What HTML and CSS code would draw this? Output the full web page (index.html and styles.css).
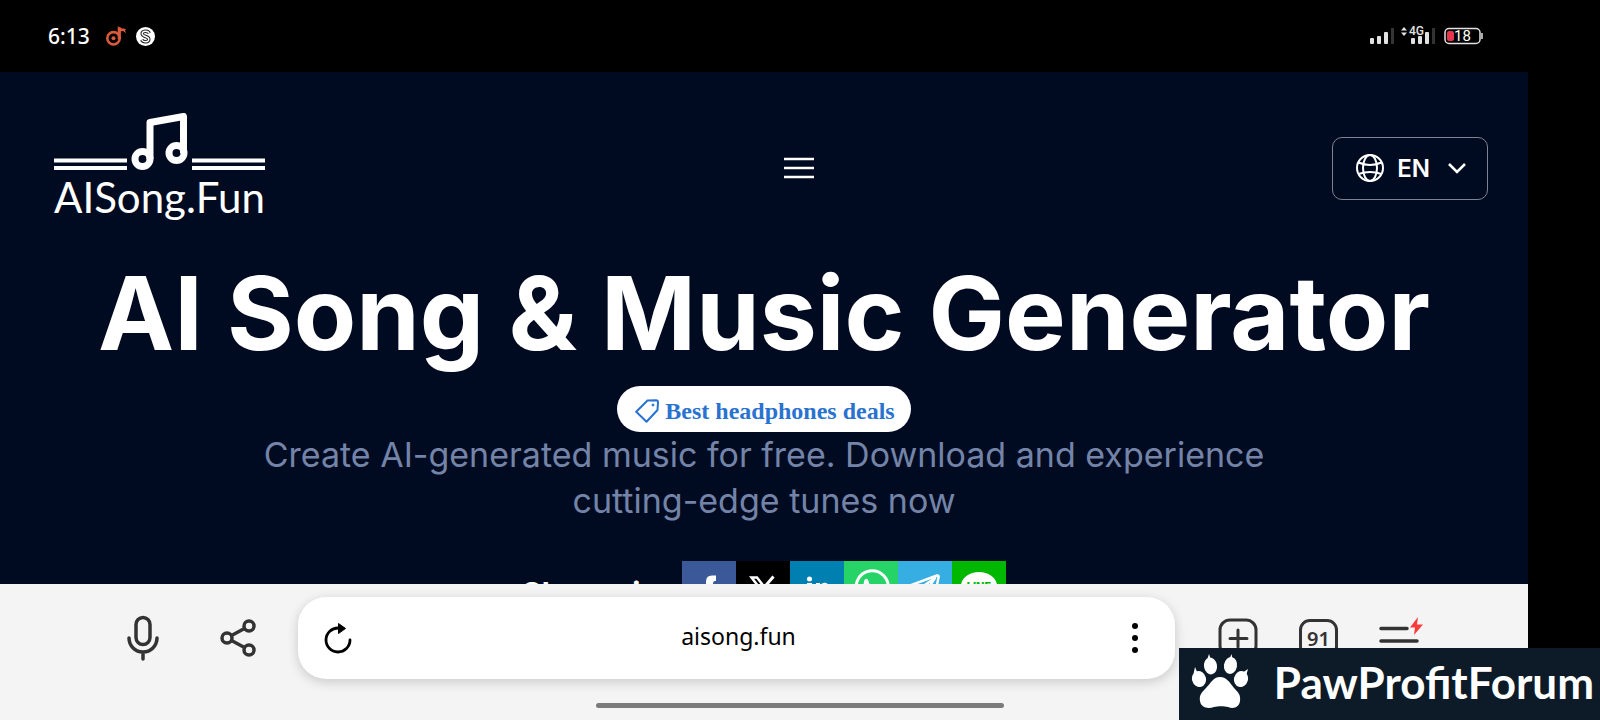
FILE: index.html
```
<!DOCTYPE html>
<html lang="en">
<head>
    <meta charset="UTF-8">
    <meta name="viewport" content="width=device-width, initial-scale=1.0">
    <title>AI Song &amp; Music Generator</title>
    <link rel="stylesheet" href="styles.css">
</head>
<body>
    <div class="phone">
        <!-- Status bar -->
        <div class="status-bar">
            <div class="status-left">
                <span class="clock">6:13</span>
                <svg class="status-note" viewBox="0 0 20 20" width="20" height="20">
                    <circle cx="7.5" cy="12.3" r="6.2" fill="none" stroke="#dc5a3c" stroke-width="2.600"/>
                    <circle cx="7.5" cy="12.3" r="2" fill="#dc5a3c"/>
                    <path d="M13.3 13V1.5" stroke="#dc5a3c" stroke-width="3.2"/>
                    <path d="M11.5 0l4 2.2 4.5.8-1 1.5 1 2.8-3-2.3-3.2.5z" fill="#dc5a3c"/>
                </svg>
                <svg class="status-s" viewBox="0 0 20 20" width="19" height="19">
                    <circle cx="10" cy="10" r="10" fill="#fff"/>
                    <path d="M14 6.6C12.500 3.500 6.500 3.800 6.500 7.200c0 3.400 7 2.200 7 5.600 0 3.400-6 3.700-7.500.6" fill="none" stroke="#222" stroke-width="3.600"/>
                    <path d="M14 6.600C12.500 3.500 6.500 3.800 6.500 7.200c0 3.400 7 2.200 7 5.600 0 3.400-6 3.700-7.500.6" fill="none" stroke="#fff" stroke-width="1.400"/>
                </svg>
            </div>
            <div class="status-right">
                <svg viewBox="0 0 26 20" width="26" height="20" fill="#e2e2e2">
                    <rect x="1" y="12" width="4" height="6" rx="1"/>
                    <rect x="8" y="10" width="4" height="8" rx="1"/>
                    <rect x="15" y="6" width="4" height="12" rx="1"/>
                    <rect x="22" y="2" width="3" height="16" fill="#333"/>
                </svg>
                <svg class="signal-4g" viewBox="0 0 36 20" width="36" height="20" fill="#e2e2e2">
                    <path d="M1 4.500L4 1l3 3.500zM1 6.500L4 10l3-3.500z"/>
                    <text x="9" y="9" class="signal-text">4G</text>
                    <rect x="11" y="12" width="4" height="6" rx="1"/>
                    <rect x="18" y="10" width="4" height="8" rx="1"/>
                    <rect x="25" y="6" width="4" height="12" rx="1"/>
                    <rect x="32" y="2" width="3" height="16" fill="#333"/>
                </svg>
                <svg viewBox="0 0 39 18" width="39" height="18">
                    <rect x="1" y="1.500" width="35" height="15" rx="4" fill="none" stroke="#e2e2e2" stroke-width="1.500"/>
                    <rect x="37" y="6" width="2" height="6" fill="#aaa"/>
                    <rect x="3" y="4" width="7" height="10" rx="2" fill="#e8364a"/>
                    <text x="10" y="14" class="battery-text">18</text>
                </svg>
            </div>
        </div>

        <!-- Web page -->
        <main class="page">
            <header class="site-header">
                <a class="logo" href="#" aria-label="AISong.Fun">
                    <svg viewBox="0 0 212 58" width="212" height="58" fill="none" stroke="#fff">
                        <path d="M0 47.500h73M0 55h73M138 47.500h73M138 55h73" stroke-width="4"/>
                        <circle cx="88.500" cy="46" r="7.500" stroke-width="7"/>
                        <circle cx="122.500" cy="40" r="7.500" stroke-width="7"/>
                        <path d="M96 46V9.500L129.500 3.500V40" stroke-width="7" stroke-linejoin="round"/>
                    </svg>
                    <span class="logo-text">AISong.Fun</span>
                </a>
                <button class="menu-btn" aria-label="Menu">
                    <svg viewBox="0 0 32 24" width="32" height="24" stroke="#fff" stroke-width="2.500">
                        <path d="M1 3h30M1 12h30M1 21h30"/>
                    </svg>
                </button>
                <button class="lang-btn">
                    <svg viewBox="0 0 28 28" width="28" height="28" fill="none" stroke="#fff" stroke-width="2">
                        <circle cx="14" cy="14" r="13"/>
                        <ellipse cx="14" cy="14" rx="7" ry="13"/>
                        <path d="M2.500 8.500Q14 13.500 25.500 8.500M2.500 20Q14 16 25.500 20"/>
                    </svg>
                    <span>EN</span>
                    <svg class="chevron" viewBox="0 0 18 12" width="18" height="12" fill="none" stroke="#fff" stroke-width="2.500">
                        <path d="M1 2l8 8 8-8"/>
                    </svg>
                </button>
            </header>

            <section class="hero">
                <h1>AI Song &amp; Music Generator</h1>
                <a class="deal" href="#">
                    <svg viewBox="0 0 24 24" width="24" height="24" fill="none" stroke="#2a72d0" stroke-width="2" stroke-linejoin="round">
                        <path d="M12.500 1.500L21 1.200Q23 1.200 23 3.500L22.500 11 11.500 22.800 1.200 12.800z"/>
                        <circle cx="18" cy="6" r="1" fill="#2a72d0" stroke-width="1"/>
                    </svg>
                    <span>Best headphones deals</span>
                </a>
                <p>Create AI-generated music for free. Download and experience cutting-edge tunes now</p>
                <div class="share">
                    <span class="share-label">Share via:</span>
                    <div class="share-list">
                        <a class="share-link facebook" href="#" aria-label="Facebook">
                            <svg viewBox="0 0 54 54"><path d="M34 14.500h-4q-6 0-6 6V26h-5v6h5v14h7V32h4.500l1-6H31v-3q0-3 2-3h1z" fill="#fff"/></svg>
                        </a>
                        <a class="share-link x" href="#" aria-label="X">
                            <svg viewBox="0 0 54 54" fill="none" stroke="#fff"><path d="M15.500 16.500h5.500l17 22h-5.500z" stroke-width="2.500"/><path d="M37.500 15.500L28.500 26M25 29l-9 10.500" stroke-width="3"/></svg>
                        </a>
                        <a class="share-link linkedin" href="#" aria-label="LinkedIn">
                            <svg viewBox="0 0 54 54" fill="#fff"><circle cx="19.500" cy="18" r="2.500"/><path d="M17 22h5v17h-5zM26 22h4v2q6-5 9 1v14h-5V27q-2-2-4 1v11h-4z"/></svg>
                        </a>
                        <a class="share-link whatsapp" href="#" aria-label="WhatsApp">
                            <svg viewBox="0 0 54 54"><path d="M12 42l2.500-8A16 16 0 1 1 20 39.500z" fill="none" stroke="#fff" stroke-width="3"/><path d="M20 20q2-4 4-1l1.500 4-2 2q2 4 6 6l2-2 4 2q1 3-3 4-10 0-13-11z" fill="#fff"/></svg>
                        </a>
                        <a class="share-link telegram" href="#" aria-label="Telegram">
                            <svg viewBox="0 0 54 54" fill="none" stroke="#fff" stroke-width="2.500" stroke-linejoin="round"><path d="M12 24.500L39 14.500q2-.5 1.500 2L36 39l-9-7-5 5-1-9zM21 28l16-11-10 15"/></svg>
                        </a>
                        <a class="share-link line" href="#" aria-label="LINE">
                            <svg viewBox="0 0 54 54"><path d="M27 11c10 0 18 6 18 14 0 7-9 13-18 19v-5c-10 0-18-6-18-14s8-14 18-14z" fill="#fff"/><text x="27" y="29" class="line-text">LINE</text></svg>
                        </a>
                    </div>
                </div>
            </section>
        </main>

        <!-- Browser toolbar -->
        <footer class="browser">
            <div class="toolbar">
                <button class="tool" aria-label="Voice search">
                    <svg viewBox="0 0 32 46" width="32" height="46" fill="none" stroke="#333" stroke-width="3.500" stroke-linecap="round">
                        <rect x="9" y="2.500" width="14" height="27" rx="7"/>
                        <path d="M2 23a14 14 0 0 0 28 0M16 37.500V44"/>
                    </svg>
                </button>
                <button class="tool" aria-label="Share">
                    <svg viewBox="0 0 36 40" width="36" height="40" fill="none" stroke="#333" stroke-width="3.500">
                        <circle cx="7" cy="20" r="5"/>
                        <circle cx="29" cy="8" r="5"/>
                        <circle cx="29" cy="32" r="5"/>
                        <path d="M11.500 17.500l13-7M11.500 22.500l13 7"/>
                    </svg>
                </button>
                <div class="address">
                    <button class="address-btn" aria-label="Reload">
                        <svg viewBox="0 0 28 32" width="28" height="32">
                            <path d="M26 18A12 12 0 1 1 14.500 6" fill="none" stroke="#000" stroke-width="2.800" stroke-linecap="round"/>
                            <path d="M14.500 1.500l7 5-7 5z" stroke="#000" stroke-linejoin="round"/>
                        </svg>
                    </button>
                    <input class="address-input" type="text" value="aisong.fun" aria-label="Address">
                    <button class="address-btn" aria-label="More">
                        <svg viewBox="0 0 6 30" width="6" height="30">
                            <circle cx="3" cy="3" r="3"/>
                            <circle cx="3" cy="15" r="3"/>
                            <circle cx="3" cy="27" r="3"/>
                        </svg>
                    </button>
                </div>
                <button class="tool small" aria-label="New tab">
                    <svg viewBox="0 0 40 40" width="40" height="40" fill="none" stroke="#333" stroke-width="3" stroke-linecap="round">
                        <rect x="2" y="2" width="36" height="36" rx="10"/>
                        <path d="M20 12v17M12 20.500h17"/>
                    </svg>
                </button>
                <button class="tool small" aria-label="Tabs"><span class="tab-count">91</span></button>
                <button class="tool small" aria-label="Browser menu">
                    <svg viewBox="0 0 46 46" width="46" height="46" stroke="#333" stroke-width="3.500" stroke-linecap="round">
                        <path d="M4 13.500h26M4 26h36M4 38h36"/>
                        <path d="M41 2l-8 10.500h5L37 20l9-10.500h-6z" fill="#f93a3a" stroke="none"/>
                    </svg>
                </button>
            </div>
            <div class="home-row"><div class="home-bar"></div></div>
        </footer>
    </div>

    <a class="forum-badge" href="#">
        <svg viewBox="0 0 58 56" width="58" height="56" fill="#fff">
            <ellipse cx="8" cy="25" rx="7" ry="8" transform="rotate(-15 8 25)"/>
            <ellipse cx="19.500" cy="12" rx="6.500" ry="8.500" transform="rotate(-10 19.500 12)"/>
            <ellipse cx="39.500" cy="11.500" rx="6.500" ry="8.500" transform="rotate(10 39.500 11.500)"/>
            <ellipse cx="50" cy="25" rx="7" ry="8" transform="rotate(15 50 25)"/>
            <path d="M2.500 20L4 13l2.500 6zM16 6l2-6 2 6zM38 6l2.500-6 1.500 7zM51 19l6-4-2 7z"/>
            <path d="M29 23c7 0 10 6 14 11 4 4 7 7 6 13-1 7-7 8-12 6-4-1-10-1-14 0-6 2-13 1-14-6-1-6 2-9 6-13 5-5 7-11 14-11z"/>
        </svg>
        <span>PawProfitForum</span>
    </a>
</body>
</html>
```
FILE: styles.css
```
* {
    box-sizing: border-box;
}
body {
    margin: 0;
    background: #000;
    color: #fff;
    font-family: 'Inter', 'Liberation Sans', sans-serif;
}
a {
    color: inherit;
    text-decoration: none;
}
button {
    border: none;
    background: none;
    padding: 0;
    color: inherit;
    font: inherit;
    cursor: pointer;
}
svg {
    display: block;
    flex-shrink: 0;
}
.phone {
    display: flex;
    flex-direction: column;
    height: 100vh;
    padding-right: 72px;
}

/* status bar */
.status-bar {
    display: flex;
    justify-content: space-between;
    align-items: center;
    height: 72px;
    padding: 0 45px 0 48px;
    flex-shrink: 0;
}
.status-left, .status-right {
    display: flex;
    align-items: center;
}
.clock {
    font-family: 'Noto Sans', sans-serif;
    font-size: 21px;
    font-weight: 500;
    margin-right: 16px;
}
.status-s {
    margin-left: 10px;
}
.signal-4g {
    margin: 0 8px 0 5px;
}
.signal-text {
    font-family: 'Roboto', sans-serif;
    font-size: 12px;
    font-weight: 500;
}
.battery-text {
    font-family: 'Roboto', sans-serif;
    font-size: 15px;
    fill: #fff;
}

/* web page */
.page {
    flex: 1;
    min-height: 0;
    overflow: hidden;
    background: #000b21;
}
.site-header {
    display: flex;
    justify-content: space-between;
    align-items: center;
    padding: 41px 40px 0 54px;
}
.logo-text {
    display: block;
    height: 52px;
    font-family: 'Lato', sans-serif;
    font-size: 42px;
    line-height: 52px;
}
.lang-btn {
    display: flex;
    align-items: center;
    height: 63px;
    padding: 0 21px 0 23px;
    border: 1px solid #7d8390;
    border-radius: 10px;
    font-size: 24px;
    font-weight: 600;
}
.lang-btn span {
    margin: 0 18px 0 13px;
}
.hero {
    display: flex;
    flex-direction: column;
    align-items: center;
    text-align: center;
}
h1 {
    margin: 28px 0 0;
    font-size: 102px;
    font-weight: 700;
    line-height: 124px;
}
.deal {
    display: flex;
    align-items: center;
    gap: 6px;
    height: 46px;
    margin-top: 11px;
    padding: 4px 16px 0 18px;
    border-radius: 23px;
    background: #fff;
    color: #2a72d0;
    font-family: 'Liberation Serif', serif;
    font-size: 24px;
    font-weight: 700;
}
.hero p {
    max-width: 1060px;
    margin: 0;
    color: #7484a8;
    font-size: 34px;
    line-height: 46px;
}
.share {
    display: flex;
    gap: 14px;
    margin-top: 37px;
}
.share-label {
    padding-top: 12px;
    font-size: 30px;
    font-weight: 700;
    line-height: 40px;
}
.share-list {
    display: flex;
}
.share-link {
    width: 54px;
    height: 54px;
}
.facebook {
    background: #3b5998;
}
.x {
    background: #000;
}
.linkedin {
    background: #007fb1;
}
.whatsapp {
    background: #25d366;
}
.telegram {
    background: #37aee2;
}
.line {
    background: #00b800;
}
.line-text {
    font-size: 11px;
    font-weight: 800;
    fill: #00b800;
    text-anchor: middle;
}

/* browser toolbar */
.browser {
    height: 136px;
    flex-shrink: 0;
    background: #f4f4f4;
    color: #333;
}
.toolbar {
    display: flex;
    align-items: center;
    padding: 13px 88px 0 95px;
}
.tool {
    display: flex;
    justify-content: center;
    align-items: center;
    width: 95px;
    height: 82px;
    flex-shrink: 0;
}
.tool.small {
    width: 81px;
}
.tab-count {
    width: 39px;
    height: 39px;
    border: 3px solid #333;
    border-radius: 11px;
    font-family: 'Noto Sans', sans-serif;
    font-size: 20px;
    font-weight: 600;
    line-height: 33px;
}
.address {
    display: flex;
    flex: 1;
    align-items: center;
    min-width: 0;
    height: 82px;
    margin: 0 22px 0 13px;
    border-radius: 28px;
    background: #fff;
    box-shadow: 0 3px 12px rgba(0, 0, 0, 0.18);
}
.address-btn {
    display: flex;
    justify-content: center;
    width: 80px;
    flex-shrink: 0;
}
.address-input {
    flex: 1;
    min-width: 0;
    padding: 0 0 4px 4px;
    border: none;
    outline: none;
    background: none;
    color: #000;
    font-family: 'Noto Sans', sans-serif;
    font-size: 23px;
    text-align: center;
}
.home-row {
    display: flex;
    justify-content: center;
    padding: 24px 0 0 72px;
}
.home-bar {
    width: 408px;
    height: 5px;
    border-radius: 3px;
    background: #7b7b7b;
}

/* badge in the corner, over the toolbar */
.forum-badge {
    position: absolute;
    right: 0;
    bottom: 0;
    display: flex;
    align-items: center;
    gap: 25px;
    height: 72px;
    padding: 0 6px 4px 12px;
    background: #0c1b27;
    font-family: 'Lato', sans-serif;
    font-size: 44px;
    font-weight: 700;
}
```
